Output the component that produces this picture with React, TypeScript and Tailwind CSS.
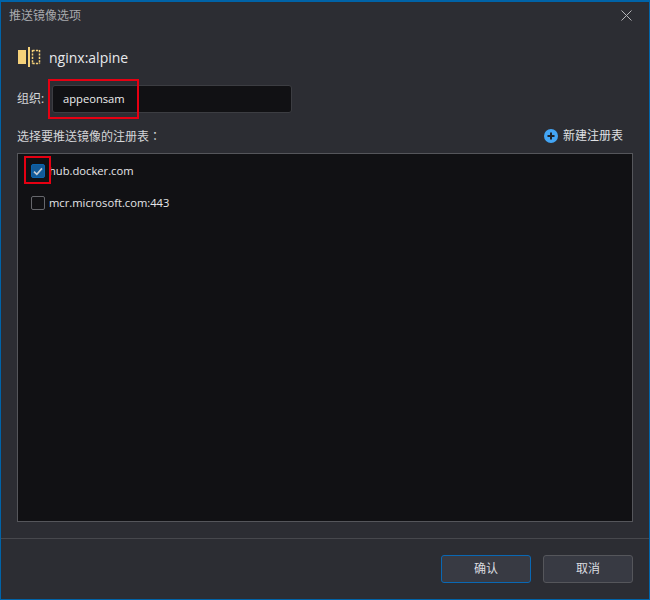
import React from "react";

const font = { fontFamily: '"Open Sans","Noto Sans CJK SC",sans-serif' };

function Check({ checked }: { checked?: boolean }) {
  return checked ? (
    <span className="flex h-[14px] w-[14px] shrink-0 items-center justify-center rounded-[2px] border border-[#0a64ae] bg-[#125a98]">
      <svg width="10" height="9" viewBox="0 0 10 9" fill="none">
        <path d="M1 4.6 L3.8 7.3 L9 1.4" stroke="#c4ccd4" strokeWidth="1.7" />
      </svg>
    </span>
  ) : (
    <span className="h-[14px] w-[14px] shrink-0 rounded-[2px] border border-[#66676c] bg-[#111114]" />
  );
}

export default function App() {
  return (
    <div
      style={font}
      className="flex h-[600px] w-[650px] flex-col overflow-hidden border border-t-2 border-[#0063a8] bg-[#2c2d33] text-[12px] text-[#e4e5e8]"
    >
      <div className="flex h-[28px] shrink-0 items-center justify-between pl-[8px] pr-[17px] text-[#a8a9ad]">
        <span>推送镜像选项</span>
        <svg width="11" height="11" viewBox="0 0 11 11" fill="none" className="mb-[1px]">
          <path d="M0.5 0.5 L10.500 10.500 M10.500 0.5 L0.500 10.500" stroke="#b4b5b8" strokeWidth="1" />
        </svg>
      </div>

      <div className="flex min-h-0 flex-1 flex-col px-[16px]">
        <div className="mt-[15px] flex h-[24px] shrink-0 items-center">
          <svg width="24" height="20" viewBox="0 0 24 20" className="shrink-0">
            <rect x="1" y="3" width="8" height="14" fill="#f5d17a" />
            <rect x="11" y="0" width="2" height="20" fill="#f5d17a" />
            <path d="M15.500 3.500h7M15.500 16.500h7M15.500 3v14M22.500 3v14" stroke="#f5d17a" strokeWidth="1.500" strokeDasharray="2.200 1.200" fill="none" />
          </svg>
          <span className="ml-[8px] text-[14px] text-[#e8e9ec]">nginx:alpine</span>
        </div>

        <div className="mt-[16px] flex h-[28px] shrink-0 items-center">
          <span className="w-[35px] shrink-0 text-[#d4d5d8]">组织:</span>
          <div className="relative h-[28px] w-[240px]">
            <div className="flex h-full items-center rounded-[3px] border border-[#3c3d42] bg-[#111114] pl-[10px] text-[11.200px] text-[#eceded]">
              appeonsam
            </div>
            <div className="absolute left-[-4px] top-[-6px] h-[40px] w-[91px] border-2 border-[#e60012]" />
          </div>
        </div>

        <div className="mt-[11px] flex h-[24px] shrink-0 items-center justify-between">
          <span className="text-[#d4d5d8]">
            选择要推送镜像的注册表<span style={{ fontFamily: '"Noto Sans CJK TC",sans-serif' }}>：</span>
          </span>
          <span className="flex items-center pr-[10px]">
            <svg width="14" height="14" viewBox="0 0 14 14">
              <circle cx="7" cy="7" r="7" fill="#43a5f5" />
              <path d="M7 3.500v7M3.500 7h7" stroke="#1f2228" strokeWidth="2" />
            </svg>
            <span className="ml-[5px] text-[#dfe0e3]">新建注册表</span>
          </span>
        </div>

        <div className="mt-[5px] h-[369px] shrink-0 border border-[#55565b] bg-[#111114] pl-[13px] pt-[1px]">
          <div className="relative flex h-[32px] items-center gap-[4px]">
            <Check checked />
            <span className="text-[11.200px] text-[#e4e5e8]">hub.docker.com</span>
            <div className="absolute left-[-7px] top-[1px] h-[28px] w-[27px] border-2 border-[#e60012]" />
          </div>
          <div className="flex h-[32px] items-center gap-[4px]">
            <Check />
            <span className="text-[11.200px] text-[#e4e5e8]">mcr.microsoft.com:443</span>
          </div>
        </div>
      </div>

      <div className="flex h-[61px] shrink-0 items-start justify-end gap-[12px] border-t border-[#47484d] pr-[16px] pt-[16px]">
        <button className="h-[28px] w-[90px] rounded-[3px] border border-[#0a68b4] bg-[#383a43] text-[#dcdde0]">确认</button>
        <button className="h-[28px] w-[90px] rounded-[3px] border border-[#55565b] bg-[#383a43] text-[#dcdde0]">取消</button>
      </div>
    </div>
  );
}
